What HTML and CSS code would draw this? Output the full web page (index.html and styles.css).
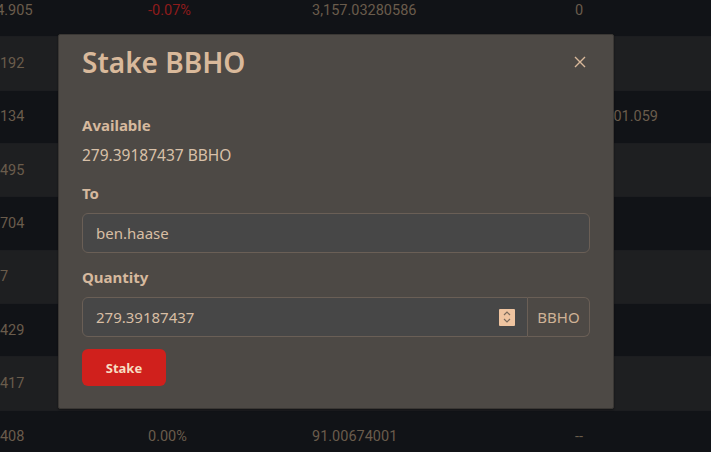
FILE: index.html
```html
<!DOCTYPE html>
<html>
<head>
<meta charset="utf-8">
<link rel="stylesheet" href="styles.css">
</head>
<body>
<div class="table">
  <div class="row dark"><span class="c1">14.905</span><span class="c2 neg">-0.07%</span><span class="c3">3,157.03280586</span><span class="c4">0</span><span class="c5"></span></div>
  <div class="row light"><span class="c1">0.192</span><span class="c2"></span><span class="c3"></span><span class="c4"></span><span class="c5"></span></div>
  <div class="row dark"><span class="c1">0.134</span><span class="c2"></span><span class="c3"></span><span class="c4"></span><span class="c5">2,301.059</span></div>
  <div class="row light"><span class="c1">0.495</span><span class="c2"></span><span class="c3"></span><span class="c4"></span><span class="c5"></span></div>
  <div class="row dark"><span class="c1">0.704</span><span class="c2"></span><span class="c3"></span><span class="c4"></span><span class="c5"></span></div>
  <div class="row light"><span class="c1">2.7</span><span class="c2"></span><span class="c3"></span><span class="c4"></span><span class="c5"></span></div>
  <div class="row dark"><span class="c1">0.429</span><span class="c2"></span><span class="c3"></span><span class="c4"></span><span class="c5"></span></div>
  <div class="row light"><span class="c1">0.417</span><span class="c2"></span><span class="c3"></span><span class="c4"></span><span class="c5"></span></div>
  <div class="row dark"><span class="c1">0.408</span><span class="c2">0.00%</span><span class="c3">91.00674001</span><span class="c4">--</span><span class="c5"></span></div>
</div>

<div class="modal">
  <div class="modal-header">
    <h2 class="title">Stake BBHO</h2>
    <button class="close" aria-label="Close">
      <svg width="12" height="12" viewBox="0 0 12 12"><path d="M1 1L11 11M11 1L1 11" stroke="#d9b99b" stroke-width="1.4" fill="none"/></svg>
    </button>
  </div>
  <div class="modal-body">
    <div class="label">Available</div>
    <div class="value">279.39187437 BBHO</div>
    <div class="label">To</div>
    <div class="input"><span>ben.haase</span></div>
    <div class="label">Quantity</div>
    <div class="group">
      <div class="input grow"><span>279.39187437</span>
        <span class="spin"><svg width="10" height="14" viewBox="0 0 10 14"><path d="M2 5L5 2L8 5M2 9L5 12L8 9" stroke="#7a6a5c" stroke-width="1.2" fill="none"/></svg></span>
      </div>
      <div class="addon">BBHO</div>
    </div>
    <button class="stake">Stake</button>
  </div>
</div>
</body>
</html>
```
FILE: styles.css
```css
html, body {
  margin: 0;
  padding: 0;
  width: 711px;
  height: 452px;
  overflow: hidden;
  background: #111317;
  font-family: "Noto Sans", "Open Sans", sans-serif;
}
.table {
  margin-top: -16px;
}
.row {
  display: grid;
  grid-template-columns: 148px 164px 263px 40px 43px;
  height: 53.33px;
  align-items: center;
  font-family: Roboto, "Noto Sans", sans-serif;
  font-size: 14.5px;
  color: #6a5c4c;
  box-sizing: border-box;
  border-bottom: 1px solid #1c1d20;
}
.row.dark { background: #111317; }
.row.light { background: #1e1f21; }
.c1 { margin-left: -12px; white-space: nowrap; }
.c5 { justify-self: end; white-space: nowrap; }
.neg { color: #8e1b1b; }

.modal {
  position: absolute;
  left: 58px;
  top: 34px;
  width: 556px;
  height: 375px;
  box-sizing: border-box;
  background: #4d4945;
  border: 1px solid #3a3734;
  border-radius: 2px;
  box-shadow: 0 1px 2px rgba(0,0,0,0.4);
}
.modal-header {
  display: flex;
  align-items: center;
  justify-content: space-between;
  padding: 7px 23px 0 23px;
  height: 40px;
}
.title {
  margin: 0;
  font-size: 28px;
  font-weight: 600;
  color: #d9b99b;
  line-height: 36px;
}
.close {
  background: none;
  border: 0;
  padding: 0;
  margin-right: 4px;
  display: flex;
}
.modal-body {
  padding: 33px 23px 0 23px;
  display: flex;
  flex-direction: column;
}
.label {
  font-size: 15px;
  font-weight: 700;
  color: #d6b99e;
  line-height: 20px;
  margin-bottom: 10px;
}
.value {
  font-size: 15.5px;
  color: #d8c0a8;
  line-height: 20px;
  margin-bottom: 18px;
}
.input {
  height: 40px;
  box-sizing: border-box;
  border: 1px solid #6a5f56;
  background: #474747;
  border-radius: 6px;
  display: flex;
  align-items: center;
  padding: 0 12px 0 13px;
  font-size: 15px;
  color: #d8bea4;
  margin-bottom: 14px;
}
.group {
  display: flex;
  height: 40px;
  margin-bottom: 12px;
}
.group .input {
  flex: 1;
  margin: 0;
  border-radius: 6px 0 0 6px;
  justify-content: space-between;
}
.spin {
  width: 16px;
  height: 17px;
  background: #efc4a0;
  display: flex;
  align-items: center;
  justify-content: center;
  border-radius: 1px;
}
.addon {
  width: 62px;
  box-sizing: border-box;
  border: 1px solid #6a5f56;
  border-left: 0;
  border-radius: 0 6px 6px 0;
  background: #4d4945;
  display: flex;
  align-items: center;
  justify-content: center;
  font-size: 15px;
  color: #cfb296;
}
.stake {
  align-self: flex-start;
  width: 84px;
  height: 37px;
  border: 0;
  border-radius: 6px;
  background: #d0201c;
  color: #f7dcc0;
  font-family: "Noto Sans", sans-serif;
  font-size: 13px;
  font-weight: 700;
  padding: 0;
}
```
